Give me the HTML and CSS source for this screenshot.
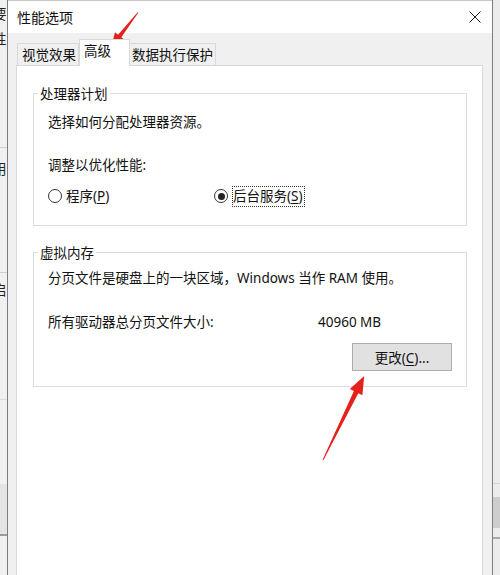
FILE: index.html
```html
<!DOCTYPE html>
<html lang="zh-CN">
<head>
<meta charset="utf-8">
<title>性能选项</title>
<link rel="stylesheet" href="styles.css">
</head>
<body>
<div class="screen">
  <div class="bg-left">
    <div class="bgl-ch c1">要</div>
    <div class="bgl-ch c2">性</div>
    <div class="bgl-line l1"></div>
    <div class="bgl-ch c3">用</div>
    <div class="bgl-line l2"></div>
    <div class="bgl-ch c4">启</div>
    <div class="bgl-line l3"></div>
    <div class="bgl-band"></div>
    <div class="bgl-line l4"></div>
  </div>
  <div class="dialog">
    <div class="titlebar">
      <span class="title">性能选项</span>
      <svg class="close" width="12" height="12" viewBox="0 0 12 12"><path d="M0.5 0.5L11.5 11.5M11.5 0.5L0.5 11.5" stroke="#1a1a1a" stroke-width="1" fill="none"/></svg>
    </div>
    <div class="body">
      <div class="tabs">
        <div class="tab t1">视觉效果</div>
        <div class="tab t2 active">高级</div>
        <div class="tab t3">数据执行保护</div>
      </div>
      <div class="panel">
        <fieldset class="group g1">
          <legend>处理器计划</legend>
          <div class="gcontent">
            <p class="line a1">选择如何分配处理器资源。</p>
            <p class="line a2">调整以优化性能:</p>
            <div class="radios">
              <div class="radio rprog"><span class="dot"></span><span class="rlabel">程序(<u>P</u>)</span></div>
              <div class="radio checked"><span class="dot"></span><span class="rlabel focus">后台服务(<u>S</u>)</span></div>
            </div>
          </div>
        </fieldset>
        <fieldset class="group g2">
          <legend>虚拟内存</legend>
          <div class="gcontent">
            <p class="line b1">分页文件是硬盘上的一块区域，Windows 当作 RAM 使用。</p>
            <div class="line b2"><span class="klabel">所有驱动器总分页文件大小:</span><span class="kval">40960 MB</span></div>
            <div class="btnrow"><button class="btn">更改(<u>C</u>)...</button></div>
          </div>
        </fieldset>
      </div>
    </div>
  </div>
  <div class="bg-right">
    <div class="bgr-line bgr-top"></div>
    <div class="bgr-band"></div>
    <div class="bgr-line bgr-bottom"></div>
  </div>
</div>
<svg class="arrows" width="500" height="575" viewBox="0 0 500 575">
  <polygon fill="#e4221c" points="138.3,12.7 121.3,37.2 124.4,39.7 111.3,47 115,32.3 118.1,34.8 137.7,12.3"/>
  <polygon fill="#e4221c" points="323.4,460.2 358.3,393.3 362.4,395.3 364.2,376 349.8,389.1 353.9,391.1 322.6,459.8"/>
</svg>
</body>
</html>
```

FILE: styles.css
```css
* { box-sizing: border-box; }
html, body {
  margin: 0;
  padding: 0;
  width: 500px;
  height: 575px;
  overflow: hidden;
  background: #f0f0f0;
}
body {
  position: relative;
  font-family: "Noto Sans", "Noto Sans CJK SC", sans-serif;
  font-size: 13.5px;
  color: #111;
}
.screen {
  display: flex;
  height: 575px;
}

/* background window, left strip */
.bg-left {
  width: 7px;
  flex: none;
  overflow: hidden;
  background: #f0f0f0;
  display: flex;
  flex-direction: column;
}
.bgl-ch {
  margin-left: -7px;
  height: 18px;
  line-height: 18px;
  font-family: "Noto Sans CJK SC", sans-serif;
  font-size: 13.5px;
  color: #222;
  white-space: nowrap;
}
.c1 { margin-top: 4px; }
.c2 { margin-top: 7px; }
.bgl-line { height: 1px; background: #cfcfcf; flex: none; }
.l1 { margin-top: 100px; }
.c3 { margin-top: 11px; }
.l2 { margin-top: 95px; }
.c4 { margin-top: 7px; }
.l3 { margin-top: 101px; background: #dadada; }
.bgl-band { margin-top: 84px; height: 50px; background: #e4e4e4; }
.l4 { background: #9a9a9a; height: 2px; }

/* background window, right strip */
.bg-right {
  width: 7px;
  flex: none;
  background: #ececec;
  display: flex;
  flex-direction: column;
}
.bgr-line { height: 1px; background: #d4d4d4; }
.bgr-top { margin-top: 483px; }
.bgr-band { margin-top: 13px; height: 31px; background: #cdcdcd; }
.bgr-bottom { margin-top: 9px; background: #a8a8a8; height: 2px; }

/* dialog */
.dialog {
  width: 486px;
  flex: none;
  border-left: 1px solid #7d7d7d;
  border-right: 1px solid #7d7d7d;
  background: #f0f0f0;
  display: flex;
  flex-direction: column;
}
.titlebar {
  height: 33px;
  background: #fff;
  display: flex;
  align-items: center;
  padding-left: 9px;
  border-top: 1px solid #c8c8c8;
}
.title {
  font-family: "Noto Sans CJK SC", sans-serif;
  font-size: 14px;
  line-height: 20px;
  color: #111;
}
.close {
  margin-left: auto;
  margin-right: 11px;
  margin-top: -1px;
  display: block;
}
.body {
  flex: 1;
  display: flex;
  flex-direction: column;
  padding: 6px 9px 0 8px;
}
.tabs {
  display: flex;
  align-items: flex-end;
  height: 26px;
  margin-left: 1px;
}
.tab {
  height: 22px;
  line-height: 21px;
  border: 1px solid #d9d9d9;
  border-bottom: none;
  background: #f0f0f0;
  white-space: nowrap;
  font-family: "Noto Sans CJK SC", sans-serif;
  font-size: 13.5px;
}
.t1 { width: 62px; padding-left: 4px; }
.t2 { width: 51px; padding-left: 4px; }
.t3 { width: 86px; padding-left: 2px; border-left: none; }
.tab.active {
  height: 27px;
  line-height: 20px;
  margin-bottom: -1px;
  background: #fff;
  position: relative;
  z-index: 1;
}
.panel {
  flex: 1;
  background: #fff;
  border: 1px solid #d9d9d9;
  border-bottom: none;
  padding: 18px 15px 0 16px;
}

/* group boxes */
.group {
  margin: 0;
  padding: 0;
  min-width: 0;
  border: 1px solid #dcdcdc;
}
.group legend {
  margin-left: 4px;
  padding: 0 2px;
  line-height: 18px;
  font-family: "Noto Sans CJK SC", sans-serif;
  font-size: 13.5px;
}
.g2 { margin-top: 17px; }
.gcontent {
  padding: 0 14px 0 14px;
}
.g1 .gcontent { padding-bottom: 19px; }
.g2 .gcontent { padding-bottom: 15px; }
.line {
  margin: 0;
  line-height: 20px;
  height: 20px;
  white-space: nowrap;
}
.a1 { margin-top: 10px; }
.a2 { margin-top: 23px; }
.radios {
  margin-top: 11px;
  display: flex;
  align-items: center;
  height: 20px;
}
.radio {
  display: flex;
  align-items: center;
  gap: 4px;
}
.rprog { width: 166px; }
.dot {
  width: 14px;
  height: 14px;
  border: 1px solid #333;
  border-radius: 50%;
  background: #fff;
  display: flex;
  align-items: center;
  justify-content: center;
  flex: none;
}
.checked .dot::after {
  content: "";
  width: 7px;
  height: 7px;
  border-radius: 50%;
  background: #222;
}
.rlabel {
  line-height: 19px;
  white-space: nowrap;
}
.focus {
  border: 1px dotted #333;
  padding: 0 1px 0 0;
}
u { text-decoration-thickness: 1px; text-underline-offset: 2px; }
.b1 { margin-top: 7px; }
.b2 { margin-top: 24px; display: flex; }
.klabel { width: 270px; flex: none; }
.btnrow {
  margin-top: 11px;
  display: flex;
  justify-content: flex-end;
}
.btn {
  width: 100px;
  height: 28px;
  background: #e1e1e1;
  border: 1px solid #adadad;
  border-radius: 0;
  font-family: "Noto Sans", "Noto Sans CJK SC", sans-serif;
  font-size: 13.5px;
  color: #111;
  padding: 0;
  margin: 0;
}

.arrows {
  position: absolute;
  left: 0;
  top: 0;
  pointer-events: none;
}
```
